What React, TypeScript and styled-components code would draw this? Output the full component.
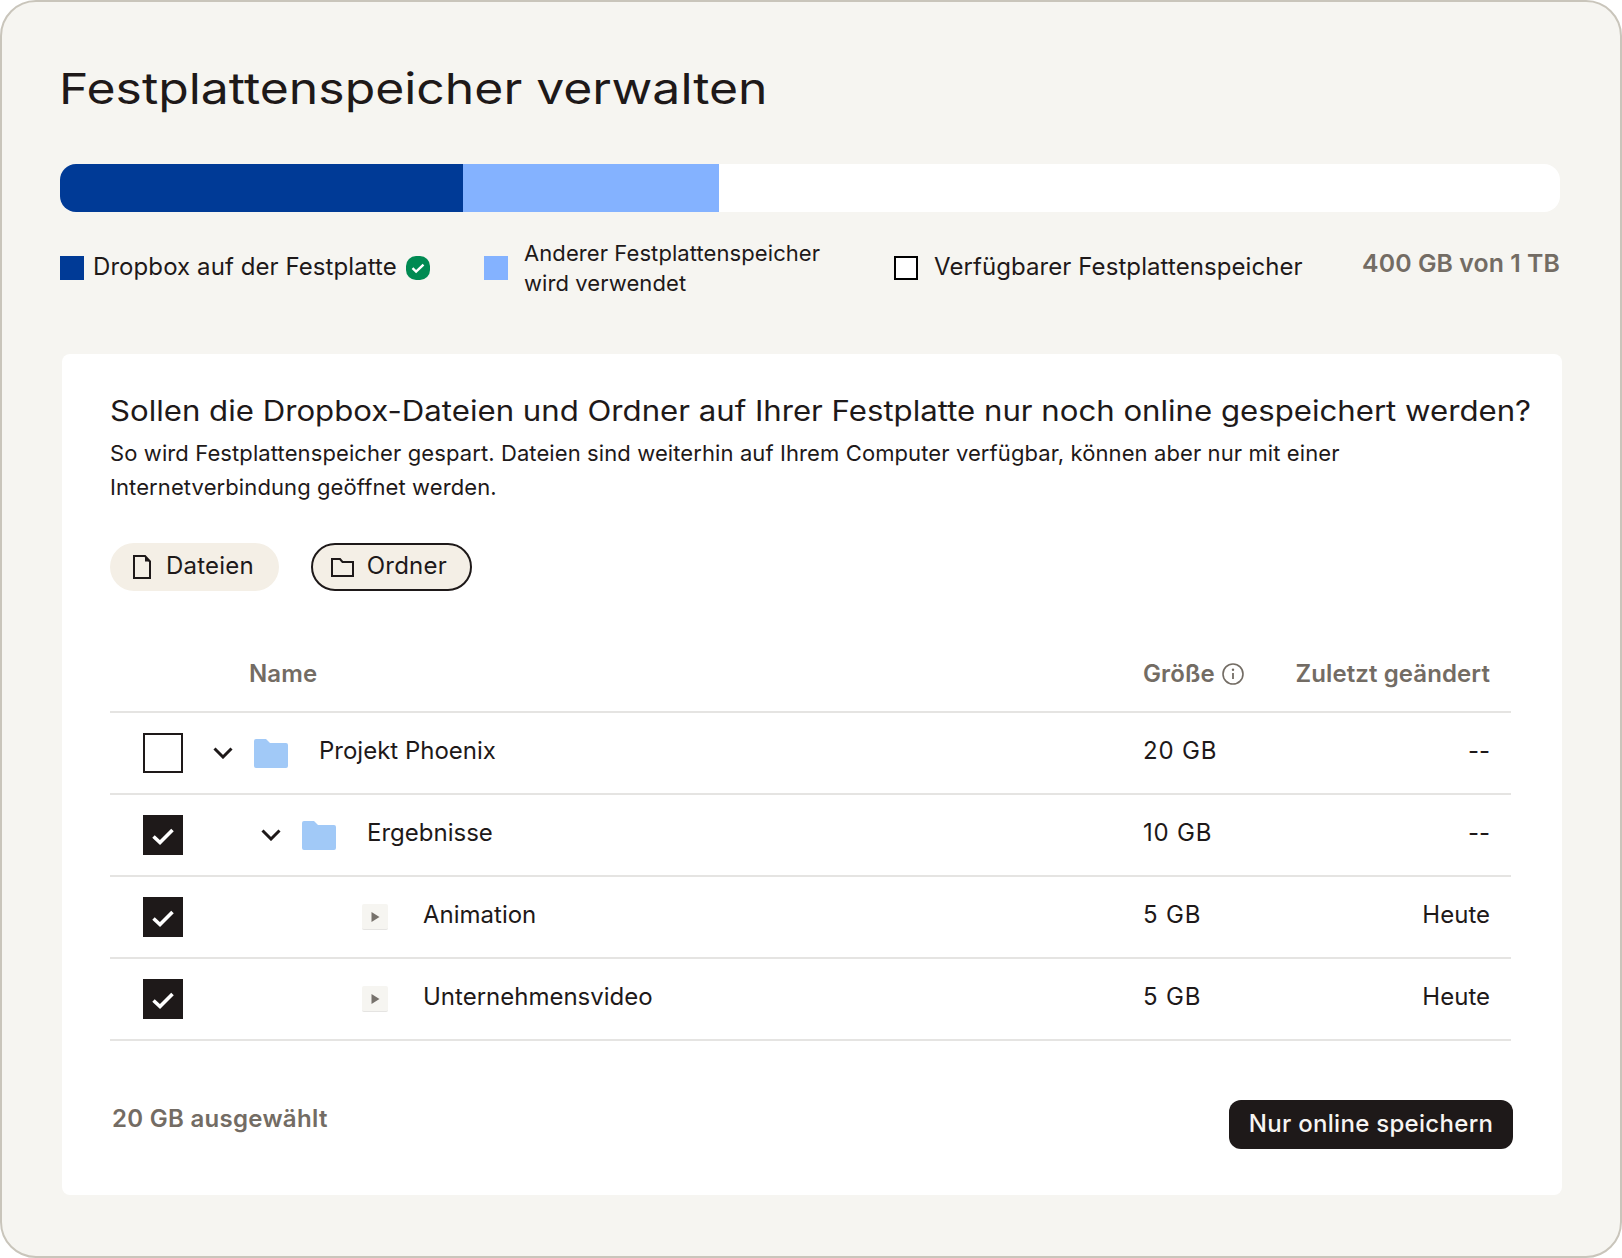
import React from "react";
import styled, { createGlobalStyle } from "styled-components";

const Global = createGlobalStyle`
  html, body { margin: 0; padding: 0; background: #fff; }
  * { box-sizing: border-box; }
`;

const BODY = `Inter, "Liberation Sans", sans-serif`;
const DISPLAY = `Inter, "Noto Sans", sans-serif`;

const Card = styled.main`
  width: 1622px;
  height: 1258px;
  background: #f6f5f1;
  border: 2px solid #c9c5bb;
  border-radius: 36px;
  padding: 60px 60px 0 58px;
  color: #1e1919;
  font-family: ${BODY};
`;
const Title = styled.h1`
  margin: 0 0 0 -1px;
  width: fit-content;
  height: 52px;
  font: 400 43px/52px ${DISPLAY};
  white-space: nowrap;
  transform: scaleX(1.16);
  transform-origin: left center;
`;
const Bar = styled.div`
  margin-top: 50px;
  height: 48px;
  background: #fff;
  border-radius: 16px;
  overflow: hidden;
  display: flex;
`;
const Segment = styled.div<{ $w: number; $c: string }>`
  width: ${(p) => p.$w}px;
  background: ${(p) => p.$c};
`;
const Legend = styled.div`
  margin-top: 26px;
  display: grid;
  grid-template-columns: 424px 410px 1fr auto;
  align-items: start;
  height: 60px;
  font-size: 24px;
  line-height: 30px;
  letter-spacing: 0.08px;
`;
const LegendItem = styled.div<{ $gap: number }>`
  display: flex;
  align-items: center;
  gap: ${(p) => p.$gap}px;
  height: 60px;
`;
const LegendLabel = styled.span`
  padding-bottom: 3px;
`;
const LegendNote = styled.span`
  font-size: 22px;
`;
const Swatch = styled.span<{ $c: string; $outline?: boolean }>`
  flex: none;
  width: 24px;
  height: 24px;
  background: ${(p) => p.$c};
  border: ${(p) => (p.$outline ? "2px solid #000" : "none")};
`;
const Total = styled.div`
  color: #736c64;
  font-weight: 600;
  font-size: 24.8px;
  line-height: 60px;
  margin-top: -5px;
`;
const Panel = styled.section`
  margin: 56px -2px 0 2px;
  height: 841px;
  background: #fff;
  border-radius: 8px;
  padding: 38px 48px 0 48px;
`;
const PanelTitle = styled.h2`
  margin: 0;
  width: fit-content;
  font: 400 28px/38px ${DISPLAY};
  white-space: nowrap;
  transform: scaleX(1.113);
  transform-origin: left center;
`;
const PanelText = styled.p`
  margin: 6px 0 0;
  width: 1300px;
  font-size: 22px;
  line-height: 34px;
  letter-spacing: 0.1px;
`;
const Pills = styled.div`
  display: flex;
  gap: 32px;
  margin-top: 39px;
`;
const Pill = styled.div<{ $active?: boolean }>`
  display: flex;
  align-items: center;
  height: 48px;
  padding: 0 ${(p) => (p.$active ? 23 : 25)}px 0 ${(p) => (p.$active ? 18 : 23)}px;
  gap: ${(p) => (p.$active ? 13 : 15)}px;
  background: #f4efe6;
  border-radius: 24px;
  border: ${(p) => (p.$active ? "2px solid #1e1919" : "none")};
  font-size: 24px;
  letter-spacing: 0.2px;
`;
const PillLabel = styled.span`
  padding-bottom: 4px;
`;
const Table = styled.div`
  margin-top: 45px;
  width: 1401px;
`;
const Row = styled.div<{ $head?: boolean }>`
  display: grid;
  grid-template-columns: 1033px 1fr auto;
  align-items: center;
  height: ${(p) => (p.$head ? 77 : 82)}px;
  padding-right: 21px;
  border-bottom: 2px solid #e5e4e2;
  font-size: 24px;
  letter-spacing: ${(p) => (p.$head ? 0.1 : 0)}px;
  color: ${(p) => (p.$head ? "#736c64" : "#1e1919")};
  font-weight: ${(p) => (p.$head ? 600 : 400)};
`;
const NameHead = styled.div`
  padding-left: 139px;
`;
const SizeHead = styled.div`
  display: flex;
  align-items: center;
  gap: 7px;
`;
const ModifiedHead = styled.div`
  text-align: right;
`;
const NameCell = styled.div`
  display: flex;
  align-items: center;
`;
const Check = styled.span<{ $on?: boolean }>`
  flex: none;
  margin-left: 33px;
  width: 40px;
  height: 40px;
  display: flex;
  align-items: center;
  justify-content: center;
  background: ${(p) => (p.$on ? "#1e1919" : "#fff")};
  border: 2px solid #1e1919;
`;
const Tree = styled.div<{ $indent: number }>`
  display: flex;
  align-items: center;
  margin-left: ${(p) => p.$indent}px;
`;
const Chevron = styled.svg`
  width: 20px;
  height: 12px;
  margin-right: 21px;
`;
const FolderIcon = styled.svg`
  width: 34px;
  height: 29px;
  margin-right: 31px;
`;
const Tile = styled.span`
  width: 26px;
  height: 26px;
  margin-right: 35px;
  display: flex;
  align-items: center;
  justify-content: center;
  background: #f6f5f1;
  border-radius: 2px;
  border-bottom: 1px solid #e5e4e2;
`;
const Cell = styled.span`
  padding-bottom: 6px;
`;
const SizeCell = styled(Cell)`
  letter-spacing: 0.8px;
`;
const Modified = styled(Cell)`
  text-align: right;
`;
const Footer = styled.div`
  display: flex;
  justify-content: space-between;
  align-items: flex-start;
  width: 1403px;
  margin-top: 59px;
`;
const Selected = styled.div`
  margin: 0 0 0 2px;
  color: #736c64;
  font-weight: 600;
  font-size: 24px;
  line-height: 37px;
  letter-spacing: 0.3px;
`;
const SaveButton = styled.button`
  width: 284px;
  height: 49px;
  border: 0;
  border-radius: 12px;
  background: #1e1919;
  color: #f7f5f2;
  font: 500 24px/45px ${DISPLAY};
  letter-spacing: 0.3px;
  padding: 0 0 2px;
`;

const CheckMark = () => (
  <svg width="24" height="24" viewBox="0 0 24 24" fill="none">
    <path d="M2.5 13.5 9 19.5 21.5 7" stroke="#fff" strokeWidth="3.6" />
  </svg>
);
const Folder = () => (
  <FolderIcon viewBox="0 0 34 29">
    <path d="M0 2a2 2 0 0 1 2-2h10l4 4h16a2 2 0 0 1 2 2v21a2 2 0 0 1-2 2H2a2 2 0 0 1-2-2z" fill="#a1c9f7" />
  </FolderIcon>
);
const Down = () => (
  <Chevron viewBox="0 0 20 12" fill="none">
    <path d="M1.5 1.5 10 10l8.5-8.5" stroke="#1e1919" strokeWidth="3" />
  </Chevron>
);
const Play = () => (
  <Tile>
    <svg width="10" height="12" viewBox="0 0 10 12">
      <path d="M1.5 1l8 5-8 5z" fill="#77726c" />
    </svg>
  </Tile>
);

const rows = [
  { name: "Projekt Phoenix", size: "20 GB", date: "--", on: false, indent: 30, kind: "folder" },
  { name: "Ergebnisse", size: "10 GB", date: "--", on: true, indent: 78, kind: "folder" },
  { name: "Animation", size: "5 GB", date: "Heute", on: true, indent: 179, kind: "video" },
  { name: "Unternehmensvideo", size: "5 GB", date: "Heute", on: true, indent: 179, kind: "video" },
];

export default function App() {
  return (
    <>
      <Global />
      <Card>
        <Title>Festplattenspeicher verwalten</Title>
        <Bar>
          <Segment $w={402.5} $c="#003a96" />
          <Segment $w={256.5} $c="#84b2ff" />
        </Bar>
        <Legend>
          <LegendItem $gap={9}>
            <Swatch $c="#003a96" />
            <LegendLabel>Dropbox auf der Festplatte</LegendLabel>
            <svg width="24" height="24" viewBox="0 0 24 24">
              <rect width="24" height="24" rx="10" fill="#008a52" />
              <path d="M6.5 12.2l3.6 3.4L17.5 8.6" fill="none" stroke="#fff" strokeWidth="2.4" />
            </svg>
          </LegendItem>
          <LegendItem $gap={16}>
            <Swatch $c="#84b2ff" />
            <LegendNote>
              Anderer Festplattenspeicher
              <br />
              wird verwendet
            </LegendNote>
          </LegendItem>
          <LegendItem $gap={16}>
            <Swatch $c="#fff" $outline />
            <LegendLabel>Verfügbarer Festplattenspeicher</LegendLabel>
          </LegendItem>
          <Total>400 GB von 1 TB</Total>
        </Legend>
        <Panel>
          <PanelTitle>Sollen die Dropbox-Dateien und Ordner auf Ihrer Festplatte nur noch online gespeichert werden?</PanelTitle>
          <PanelText>
            So wird Festplattenspeicher gespart. Dateien sind weiterhin auf Ihrem Computer verfügbar, können aber nur mit einer Internetverbindung geöffnet werden.
          </PanelText>
          <Pills>
            <Pill>
              <svg width="18" height="24" viewBox="0 0 18 24" fill="none">
                <path d="M1 1h11l5 5.5V23H1z" stroke="#1e1919" strokeWidth="2" />
                <path d="M12 1l5 5.5h-5z" fill="#1e1919" />
              </svg>
              <PillLabel>Dateien</PillLabel>
            </Pill>
            <Pill $active>
              <svg width="23" height="19" viewBox="0 0 23 19" fill="none">
                <path d="M1 1h8l2.5 3H22v14H1z" stroke="#1e1919" strokeWidth="2" />
              </svg>
              <PillLabel>Ordner</PillLabel>
            </Pill>
          </Pills>
          <Table>
            <Row $head>
              <NameHead>Name</NameHead>
              <SizeHead>
                Größe
                <svg width="22" height="22" viewBox="0 0 22 22" fill="none">
                  <circle cx="11" cy="11" r="10" stroke="#736c64" strokeWidth="1.6" />
                  <path d="M11 10v6" stroke="#736c64" strokeWidth="1.8" />
                  <circle cx="11" cy="6.8" r="1.2" fill="#736c64" />
                </svg>
              </SizeHead>
              <ModifiedHead>Zuletzt geändert</ModifiedHead>
            </Row>
            {rows.map((r) => (
              <Row key={r.name}>
                <NameCell>
                  <Check $on={r.on}>{r.on && <CheckMark />}</Check>
                  <Tree $indent={r.indent}>
                    {r.kind === "folder" ? (
                      <>
                        <Down />
                        <Folder />
                      </>
                    ) : (
                      <Play />
                    )}
                    <Cell>{r.name}</Cell>
                  </Tree>
                </NameCell>
                <SizeCell>{r.size}</SizeCell>
                <Modified>{r.date}</Modified>
              </Row>
            ))}
          </Table>
          <Footer>
            <Selected>20 GB ausgewählt</Selected>
            <SaveButton>Nur online speichern</SaveButton>
          </Footer>
        </Panel>
      </Card>
    </>
  );
}
